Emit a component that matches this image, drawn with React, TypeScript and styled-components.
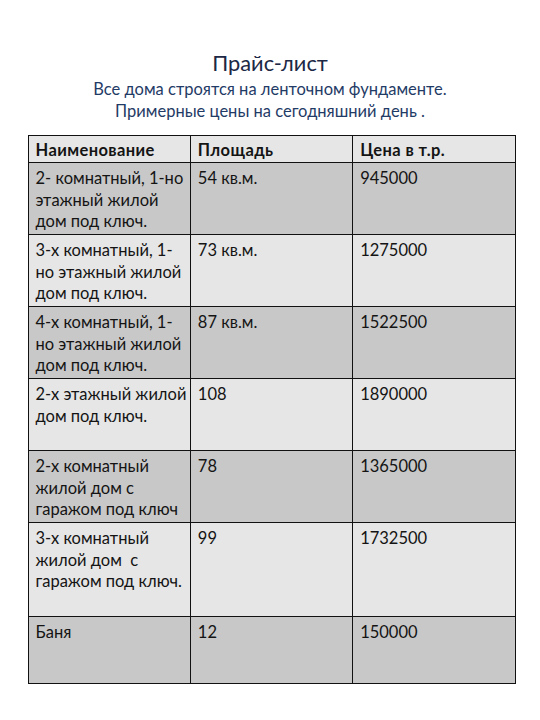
import React from "react";
import styled, { createGlobalStyle } from "styled-components";

const Global = createGlobalStyle`
  html, body { margin: 0; padding: 0; background: #fff; }
  body { font-family: Lato, "Open Sans", "Noto Sans", sans-serif; }
`;

const Page = styled.div`
  width: 540px;
  height: 720px;
  box-sizing: border-box;
  padding-top: 49px;
  display: flex;
  flex-direction: column;
  align-items: center;
`;

const Title = styled.h1`
  margin: 0;
  font-size: 21.8px;
  font-weight: 400;
  line-height: 28px;
  color: #1c2845;
`;

const Subtitle = styled.p`
  margin: 2px 0 0;
  font-size: 16.5px;
  line-height: 21.5px;
  color: #1f3b66;
  text-align: center;
`;

const Table = styled.table`
  margin-top: 13px;
  margin-left: 3px;
  width: 488px;
  border-collapse: collapse;
  table-layout: fixed;
  font-size: 16.5px;
  color: #141414;
`;

const Row = styled.tr<{ $dark?: boolean; $h: number }>`
  height: ${(p) => p.$h}px;
  background: ${(p) => (p.$dark ? "#c8c8c8" : "#e6e6e6")};
`;

const HeadCell = styled.th`
  border: 1px solid #111;
  text-align: left;
  font-weight: 700;
  letter-spacing: 0.4px;
  padding: 1px 7px 0;
  vertical-align: middle;
`;

const Cell = styled.td`
  border: 1px solid #111;
  padding: 5px 7px 0;
  vertical-align: top;
  line-height: 21.5px;
`;

const Line = styled.div`
  white-space: nowrap;
`;

type Item = { name: string[]; area: string; price: string; h: number };

const items: Item[] = [
  { name: ["2- комнатный, 1-но", "этажный жилой", "дом под ключ."], area: "54 кв.м.", price: "945000", h: 72 },
  { name: ["3-х комнатный, 1-", "но этажный жилой", "дом под ключ."], area: "73 кв.м.", price: "1275000", h: 72 },
  { name: ["4-х комнатный, 1-", "но этажный жилой", "дом под ключ."], area: "87 кв.м.", price: "1522500", h: 72 },
  { name: ["2-х этажный жилой", "дом под ключ."], area: "108", price: "1890000", h: 72 },
  { name: ["2-х комнатный", "жилой дом с", "гаражом под ключ"], area: "78", price: "1365000", h: 72 },
  { name: ["3-х комнатный", "жилой дом\u00a0 с", "гаражом под ключ."], area: "99", price: "1732500", h: 94 },
  { name: ["Баня"], area: "12", price: "150000", h: 67 },
];

export default function App() {
  return (
    <>
      <Global />
      <Page>
        <Title>Прайс-лист</Title>
        <Subtitle>
          Все дома строятся на ленточном фундаменте.
          <br />
          Примерные цены на сегодняшний день .
        </Subtitle>
        <Table>
          <thead>
            <Row $h={27}>
              <HeadCell>Наименование</HeadCell>
              <HeadCell>Площадь</HeadCell>
              <HeadCell>Цена в т.р.</HeadCell>
            </Row>
          </thead>
          <tbody>
            {items.map((it, i) => (
              <Row key={i} $dark={i % 2 === 0} $h={it.h}>
                <Cell>
                  {it.name.map((l, j) => (
                    <Line key={j}>{l}</Line>
                  ))}
                </Cell>
                <Cell>{it.area}</Cell>
                <Cell>{it.price}</Cell>
              </Row>
            ))}
          </tbody>
        </Table>
      </Page>
    </>
  );
}
